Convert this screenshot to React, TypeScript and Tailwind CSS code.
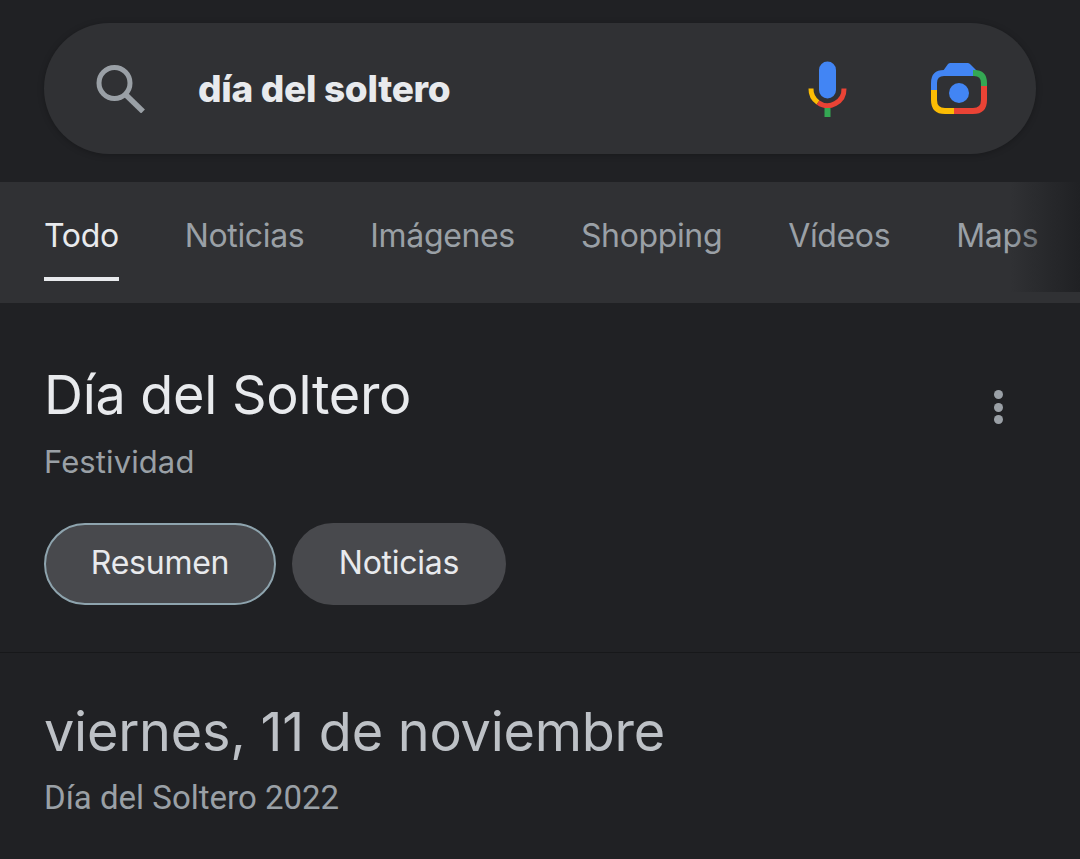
const tabs = ['Todo', 'Noticias', 'Imágenes', 'Shopping', 'Vídeos', 'Maps'];

const SearchIcon = () => (
  <svg width="52" height="48" viewBox="0 0 52 48" fill="none" stroke="#9aa0a6" strokeWidth="5">
    <circle cx="20.5" cy="18" r="15.5" />
    <path d="M31 29 L49 46.5" strokeWidth="5.5" />
  </svg>
);

const MicIcon = () => (
  <svg width="40" height="56" viewBox="0 0 40 56" fill="none">
    <rect x="11" y="0.5" width="17" height="37" rx="8.5" fill="#4285f4" />
    <path d="M3 27.5 A16.5 16.5 0 0 0 10 41.5" stroke="#fbbc04" strokeWidth="5" />
    <path d="M10 41.5 A16.5 16.5 0 0 0 36 27.5" stroke="#ea4335" strokeWidth="5" />
    <rect x="16.5" y="47" width="6" height="9" fill="#34a853" />
  </svg>
);

const LensIcon = () => (
  <svg width="56" height="52" viewBox="0 0 56 52" fill="none">
    <path d="M12 8 L17 1 Q18 0 19.5 0 H36.5 Q38 0 39 1 L46 8 Z" fill="#4285f4" />
    <path d="M3 28 V20 Q3 10 13 10 H42" stroke="#4285f4" strokeWidth="6" />
    <path d="M42 10 H43 Q53 10 53 20 V24" stroke="#34a853" strokeWidth="6" />
    <path d="M53 23 V37 Q53 48 42 48 H22" stroke="#ea4335" strokeWidth="6" />
    <path d="M23 48 H14 Q3 48 3 37 V27" stroke="#fbbc04" strokeWidth="6" />
    <circle cx="28" cy="30" r="10" fill="#4285f4" />
  </svg>
);

export default function App() {
  return (
    <div className="h-[859px] w-[1080px] overflow-hidden bg-[#202124] font-['Inter',sans-serif]">
      {/* search box */}
      <div className="px-11 pt-[23px]">
        <div className="flex h-[131px] items-center rounded-[66px] bg-[#303134] pl-[50px] pr-[49px] shadow-[0_1px_6px_rgba(0,0,0,0.25)]">
          <SearchIcon />
          <span className="ml-[52px] text-[37px] font-extrabold tracking-[-0.3px] text-[#e8eaed]">día del soltero</span>
          <div className="ml-auto flex items-center gap-[83px]">
            <MicIcon />
            <LensIcon />
          </div>
        </div>
      </div>

      {/* tab strip */}
      <div className="relative mt-[28px] flex h-[121px] gap-[66px] overflow-hidden bg-[#303134] pl-11">
        {tabs.map((tab, i) => (
          <div
            key={tab}
            className={`flex h-[99px] shrink-0 items-center whitespace-nowrap border-b-4 pt-[12px] text-[32px] font-normal tracking-[-0.35px] ${i === 0 ? 'border-[#e8eaed] text-[#e8eaed]' : 'border-transparent text-[#9aa0a6]'}`}
          >
            {tab}
          </div>
        ))}
        <div className="absolute right-0 top-0 h-[110px] w-[70px] bg-gradient-to-r from-transparent to-[#202124]" />
      </div>

      {/* holiday header */}
      <div className="relative border-b border-[#17181a] px-11 pb-[47px] pt-[57px]">
        <h1 className="text-[54px] font-normal leading-[70px] tracking-[-0.3px] text-[#e8eaed]">Día del Soltero</h1>
        <p className="mt-[12px] text-[31px] leading-[40px] tracking-[0.1px] text-[#9aa0a6]">Festividad</p>
        <div className="absolute right-[77px] top-[87px] flex flex-col gap-[3.5px]">
          <span className="h-[9px] w-[9px] rounded-full bg-[#9aa0a6]" />
          <span className="h-[9px] w-[9px] rounded-full bg-[#9aa0a6]" />
          <span className="h-[9px] w-[9px] rounded-full bg-[#9aa0a6]" />
        </div>
        <div className="mt-[41px] flex gap-[16px]">
          <div className="flex h-[82px] w-[232px] items-center justify-center rounded-full border-2 border-[#8ea4ae] bg-[#48494d] pb-[3px] text-[32px] tracking-[-0.25px] text-[#e8eaed]">
            Resumen
          </div>
          <div className="flex h-[82px] w-[214px] items-center justify-center rounded-full bg-[#48494d] pb-[3px] text-[32px] tracking-[-0.25px] text-[#e8eaed]">
            Noticias
          </div>
        </div>
      </div>

      {/* date answer */}
      <div className="px-11 pt-[44px]">
        <h2 className="text-[54px] font-normal leading-[70px] tracking-[-0.25px] text-[#bdc1c6]">viernes, 11 de noviembre</h2>
        <p className="mt-[11px] font-['Roboto',sans-serif] text-[33px] leading-[40px] text-[#9aa0a6]">Día del Soltero 2022</p>
      </div>
    </div>
  );
}
